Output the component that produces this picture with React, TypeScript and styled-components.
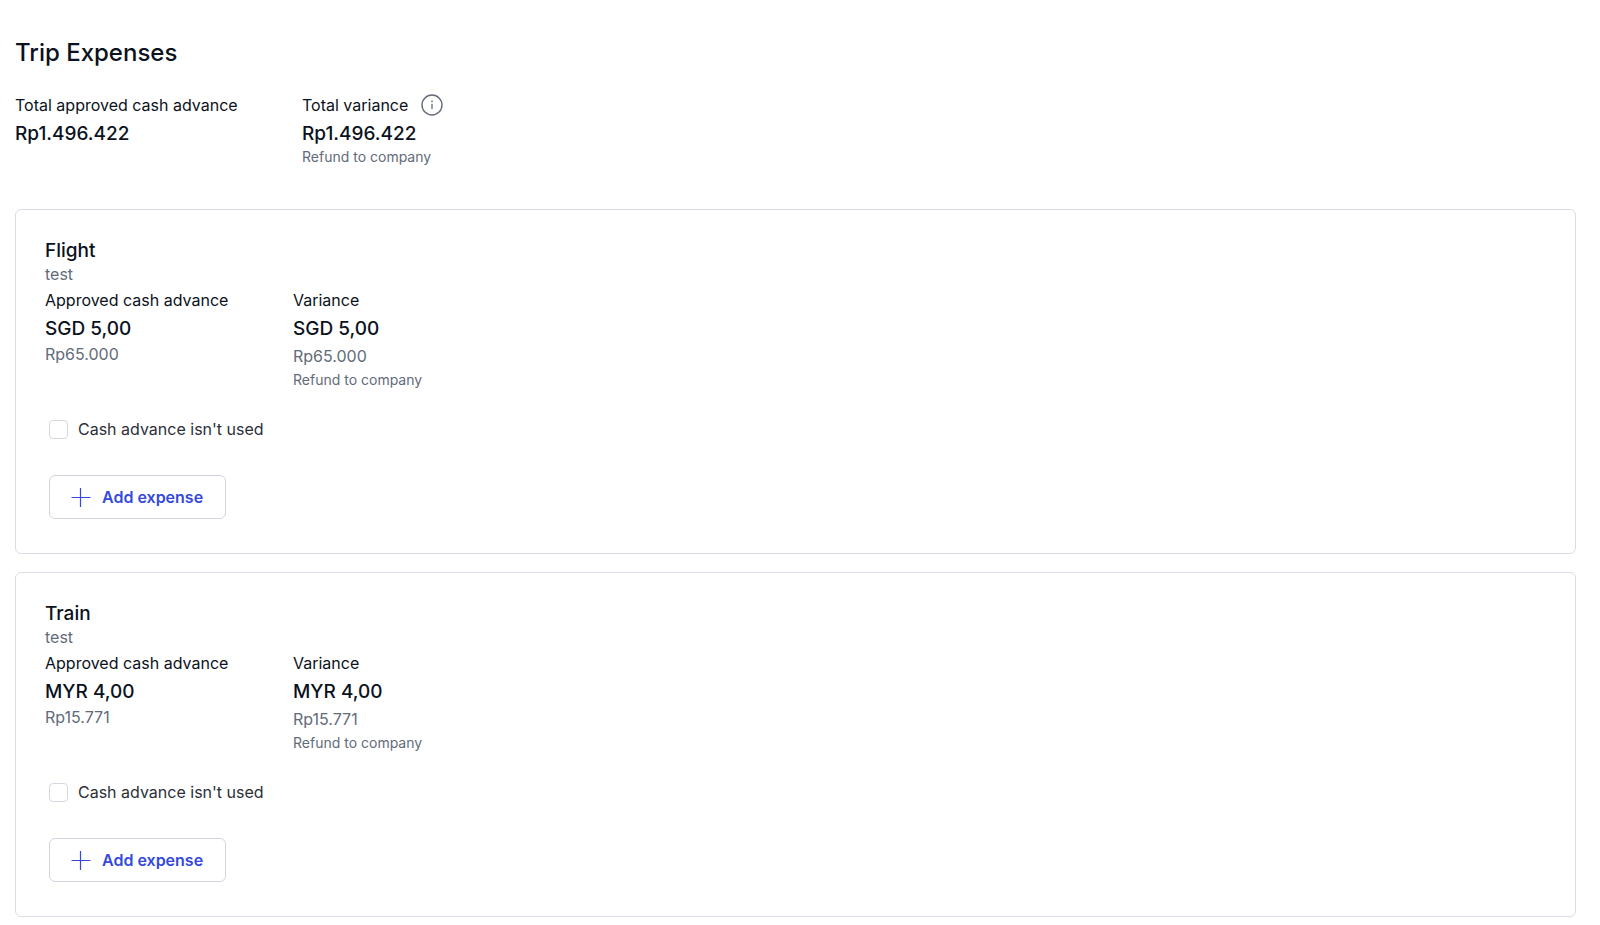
import React from "react";
import styled, { createGlobalStyle } from "styled-components";

const GlobalStyle = createGlobalStyle`
  * { box-sizing: border-box; }
  body {
    margin: 0;
    background: #ffffff;
    color: #0b1220;
    font-family: Inter, "Liberation Sans", sans-serif;
  }
  h1, h2, p, dl, dd { margin: 0; }
`;

const Page = styled.main`
  padding: 37px 24px 8px 15px;
`;

const Title = styled.h1`
  font-size: 24px;
  line-height: 32px;
  font-weight: 500;
`;

const Totals = styled.dl`
  display: grid;
  grid-template-columns: 287px 1fr;
  margin-top: 24px;
`;

const CardFigures = styled.dl`
  display: grid;
  grid-template-columns: 248px 1fr;
  margin-top: 2px;
`;

const Label = styled.dt`
  display: flex;
  align-items: center;
  gap: 13px;
  font-size: 16px;
  line-height: 24px;
`;

const Amount = styled.dd`
  margin-top: 4px;
  font-size: 19px;
  line-height: 26px;
  font-weight: 500;
`;

const Converted = styled.dd<{ $spaced?: boolean }>`
  margin: ${(p) => (p.$spaced ? "2px 0" : "0")};
  font-size: 16px;
  line-height: 24px;
  color: #626b79;
`;

const Note = styled.dd`
  font-size: 14px;
  line-height: 20px;
  color: #626b79;
`;

const InfoButton = styled.button`
  display: flex;
  padding: 0;
  border: 0;
  background: none;
  color: #626b79;
  cursor: pointer;
`;

const Cards = styled.div`
  display: grid;
  gap: 18px;
  margin-top: 42px;
`;

const Card = styled.section`
  padding: 30px 28px 34px 29px;
  border: 1px solid #d9dee6;
  border-radius: 6px;
`;

const CardTitle = styled.h2`
  font-size: 19px;
  line-height: 22px;
  font-weight: 500;
`;

const Description = styled.p`
  font-size: 16px;
  line-height: 24px;
  color: #626b79;
`;

const Actions = styled.div`
  display: flex;
  flex-direction: column;
  align-items: flex-start;
  gap: 34px;
  margin: 27px 0 0 4px;
`;

const CheckLabel = styled.label`
  display: flex;
  align-items: center;
  gap: 10px;
  font-size: 16px;
  line-height: 24px;
  color: #2b2f38;
`;

const Checkbox = styled.input`
  appearance: none;
  width: 19px;
  height: 19px;
  margin: 0;
  border: 1px solid #d3d8e0;
  border-radius: 4px;
  background: #ffffff;
  &:checked { background: #3c50e0; border-color: #3c50e0; }
`;

const AddButton = styled.button`
  display: flex;
  align-items: center;
  gap: 11px;
  height: 44px;
  padding: 0 22px 0 21px;
  border: 1px solid #d0d5dd;
  border-radius: 6px;
  background: #ffffff;
  color: #3549db;
  font-family: inherit;
  font-size: 16px;
  line-height: 24px;
  font-weight: 600;
  cursor: pointer;
`;

const InfoIcon = () => (
  <svg width="22" height="22" viewBox="0 0 22 22" fill="none" stroke="currentColor" aria-hidden="true">
    <circle cx="11" cy="11" r="10" strokeWidth="1.4" />
    <path d="M11 9.8v5.2" strokeWidth="1.3" />
    <circle cx="11" cy="7.3" r="0.9" fill="currentColor" stroke="none" />
  </svg>
);

const PlusIcon = () => (
  <svg width="20" height="20" viewBox="0 0 20 20" fill="none" stroke="currentColor" strokeWidth="1.2" aria-hidden="true">
    <path d="M.5 10.5h19M9.5 1v19" />
  </svg>
);

interface Expense {
  id: string;
  name: string;
  description: string;
  amount: string;
  converted: string;
}

const expenses: Expense[] = [
  { id: "flight", name: "Flight", description: "test", amount: "SGD 5,00", converted: "Rp65.000" },
  { id: "train", name: "Train", description: "test", amount: "MYR 4,00", converted: "Rp15.771" },
];

const ExpenseCard = ({ expense }: { expense: Expense }) => (
  <Card>
    <CardTitle>{expense.name}</CardTitle>
    <Description>{expense.description}</Description>
    <CardFigures>
      <div>
        <Label>Approved cash advance</Label>
        <Amount>{expense.amount}</Amount>
        <Converted>{expense.converted}</Converted>
      </div>
      <div>
        <Label>Variance</Label>
        <Amount>{expense.amount}</Amount>
        <Converted $spaced>{expense.converted}</Converted>
        <Note>Refund to company</Note>
      </div>
    </CardFigures>
    <Actions>
      <CheckLabel htmlFor={`${expense.id}-unused`}>
        <Checkbox type="checkbox" id={`${expense.id}-unused`} />
        Cash advance isn't used
      </CheckLabel>
      <AddButton type="button">
        <PlusIcon />
        Add expense
      </AddButton>
    </Actions>
  </Card>
);

export default function App() {
  return (
    <>
      <GlobalStyle />
      <Page>
        <Title>Trip Expenses</Title>
        <Totals>
          <div>
            <Label>Total approved cash advance</Label>
            <Amount>Rp1.496.422</Amount>
          </div>
          <div>
            <Label>
              Total variance
              <InfoButton type="button" aria-label="About total variance">
                <InfoIcon />
              </InfoButton>
            </Label>
            <Amount>Rp1.496.422</Amount>
            <Note>Refund to company</Note>
          </div>
        </Totals>
        <Cards>
          {expenses.map((expense) => (
            <ExpenseCard key={expense.id} expense={expense} />
          ))}
        </Cards>
      </Page>
    </>
  );
}
